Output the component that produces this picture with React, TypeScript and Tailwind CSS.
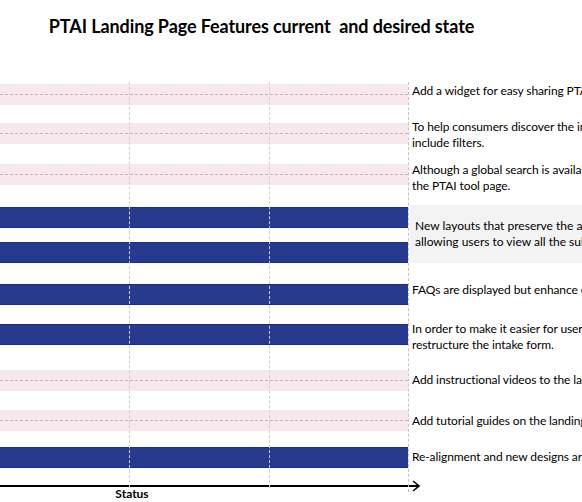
const ROWS = [
  { h: 40, band: 10, kind: "pink", text: ["Add a widget for easy sharing PTAI tools"], tpad: 9 },
  { h: 40, band: 9, kind: "pink", text: ["To help consumers discover the information they need,", "include filters."], tpad: 5 },
  { h: 42, band: 10, kind: "pink", text: ["Although a global search is available, add a search bar to", "the PTAI tool page."], tpad: 8 },
  { h: 39, band: 11, kind: "blue" },
  { h: 38, band: 7, kind: "blue" },
  { h: 41, band: 11, kind: "blue", text: ["FAQs are displayed but enhance easier navigation"], tpad: 9 },
  { h: 43, band: 10, kind: "blue", text: ["In order to make it easier for users to submit,", "restructure the intake form."], tpad: 7 },
  { h: 43, band: 13, kind: "pink", text: ["Add instructional videos to the landing page"], tpad: 15 },
  { h: 38, band: 10, kind: "pink", text: ["Add tutorial guides on the landing page"], tpad: 13 },
  { h: 38, band: 9, kind: "blue", text: ["Re-alignment and new designs are in progress"], tpad: 11 },
];

function Band({ kind, top }: { kind: string; top: number }) {
  if (kind === "blue") {
    return (
      <div style={{ marginTop: top }} className="h-[21px] w-full bg-[#283a8e] border-y border-[#1c2b86]" />
    );
  }
  return (
    <div style={{ marginTop: top }} className="h-[21px] w-full bg-[#f6e8ec] flex items-center">
      <div className="w-full border-t border-dashed border-[#c4b4bc]" />
    </div>
  );
}

export default function App() {
  return (
    <div
      className="w-[582px] h-[502px] overflow-hidden bg-white text-black"
      style={{ fontFamily: 'Lato, "Noto Sans", sans-serif' }}
    >
      <div className="h-[74px] pt-[13px] pr-[59px] text-center text-[18px] font-bold whitespace-pre tracking-[-0.1px]">
        PTAI Landing Page Features current  and desired state
      </div>

      <div className="relative">
        {/* vertical gridlines */}
        <div className="absolute left-[129px] top-[8px] h-[406px] border-l border-dashed border-[#cfcfcf]" />
        <div className="absolute left-[269px] top-[8px] h-[406px] border-l border-dashed border-[#cfcfcf]" />
        <div className="absolute left-[408px] top-[8px] h-[410px] border-l border-dashed border-[#c8c0c4]" />

        <div className="grid grid-cols-[408px_1fr]">
          {ROWS.map((r, i) => (
            <div key={i} className="contents">
              <div style={{ height: r.h }}>
                <Band kind={r.kind} top={r.band} />
              </div>
              {i === 3 ? (
                <div className="row-span-2 pt-[9px] pl-[2px] overflow-hidden">
                  <div className="h-[58px] bg-[#f3f3f3] pl-[5px] flex flex-col justify-center text-[12px] leading-[16px] whitespace-nowrap">
                    <div>New layouts that preserve the approach while</div>
                    <div>allowing users to view all the subsections</div>
                  </div>
                </div>
              ) : i === 4 ? null : (
                <div
                  style={{ paddingTop: r.tpad }}
                  className="pl-[4px] text-[12px] leading-[16px] whitespace-nowrap overflow-hidden tracking-[-0.1px]"
                >
                  {r.text?.map((t, j) => (
                    <div key={j}>{t}</div>
                  ))}
                </div>
              )}
            </div>
          ))}
        </div>

        <div className="flex items-center h-[20px] w-[420px]">
          <div className="flex-1 border-t-2 border-black" />
          <svg width="8" height="12" viewBox="0 0 8 12" className="-ml-[6px]">
            <path d="M1 1 L7 6 L1 11" fill="none" stroke="black" strokeWidth="1.6" />
          </svg>
        </div>
        <div className="w-[264px] text-center text-[12px] font-bold -mt-[11px]">Status</div>
      </div>
    </div>
  );
}
